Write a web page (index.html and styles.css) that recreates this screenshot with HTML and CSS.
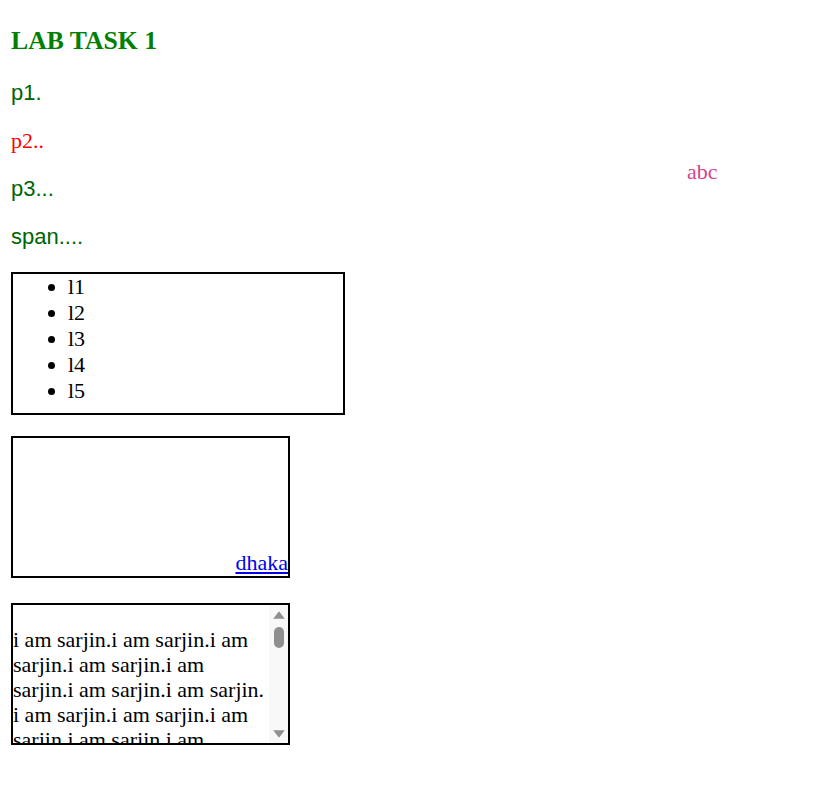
FILE: index.html
```html
<!DOCTYPE html>
<html lang="en">
<head>
<meta charset="utf-8">
<title>Lab Task 1</title>
<link rel="stylesheet" href="styles.css">
</head>
<body>
<h3 class="title">LAB TASK 1</h3>
<p class="para sans">p1.</p>
<p class="para red">p2..</p>
<p class="para sans">p3...</p>
<span class="pink">abc</span>
<p class="para sans"><span>span....</span></p>
<ul class="list">
  <li>l1</li>
  <li>l2</li>
  <li>l3</li>
  <li>l4</li>
  <li>l5</li>
</ul>
<div class="box box-link"><a href="#" class="link">dhaka</a></div>
<div class="box box-scroll">
  <div class="scroll-pane">
    <p class="scroll-text">i am sarjin.i am sarjin.i am sarjin.i am sarjin.i am sarjin.i am sarjin.i am sarjin. i am sarjin.i am sarjin.i am sarjin.i am sarjin.i am sarjin.i am sarjin.i am sarjin. i am sarjin.i am sarjin.i am sarjin.i am sarjin.i am sarjin.i am sarjin.i am sarjin.</p>
  </div>
  <div class="scrollbar" aria-hidden="true">
    <svg class="arrow" width="12" height="8" viewBox="0 0 12 8"><path d="M6 0.3 L11.8 7.7 L0.2 7.7 Z" fill="#8f8f8f"/></svg>
    <div class="thumb"></div>
    <div class="track-space"></div>
    <svg class="arrow" width="12" height="8" viewBox="0 0 12 8"><path d="M0.2 0.3 L11.8 0.3 L6 7.7 Z" fill="#8f8f8f"/></svg>
  </div>
</div>
</body>
</html>
```
FILE: styles.css
```css
html, body {
  background: #ffffff;
}
body {
  margin: 0;
  padding: 11px;
  position: relative;
  font-family: "Liberation Serif", "Times New Roman", serif;
  font-size: 22px;
  color: #000;
}
.title {
  margin: 15px 0 24px;
  font-size: 25.7px;
  font-weight: bold;
  color: #008000;
}
.para {
  margin: 22px 0;
  font-size: 22px;
}
.sans {
  font-family: "Liberation Sans", Arial, sans-serif;
  color: #006400;
}
.red {
  color: #ff0000;
}
.pink {
  position: absolute;
  left: 687px;
  top: 159px;
  color: #d6448f;
  font-size: 22px;
}
.list {
  box-sizing: border-box;
  width: 334px;
  margin: 22px 0 21px;
  padding: 0 0 9px 55px;
  border: 2px solid #000;
  line-height: 26px;
}
.box {
  box-sizing: content-box;
  width: 275px;
  height: 137.5px;
  border: 2px solid #000;
}
.box-link {
  display: flex;
  justify-content: flex-end;
  align-items: flex-end;
  margin-bottom: 25.5px;
}
.link {
  color: #0000ee;
  text-decoration: underline;
}
.box-scroll {
  display: flex;
  overflow: hidden;
}
.scroll-pane {
  flex: 1;
  min-width: 0;
  overflow: hidden;
}
.scroll-text {
  margin: 22px 0;
  line-height: 25px;
}
.scrollbar {
  width: 19px;
  flex: none;
  background: #f8f8f8;
  display: flex;
  flex-direction: column;
  align-items: center;
  padding: 6px 0 5px;
  box-sizing: border-box;
}
.arrow {
  display: block;
  flex: none;
}
.thumb {
  width: 10px;
  height: 21px;
  margin-top: 8px;
  border-radius: 5px;
  background: #8f8f8f;
  flex: none;
}
.track-space {
  flex: 1;
}
```
